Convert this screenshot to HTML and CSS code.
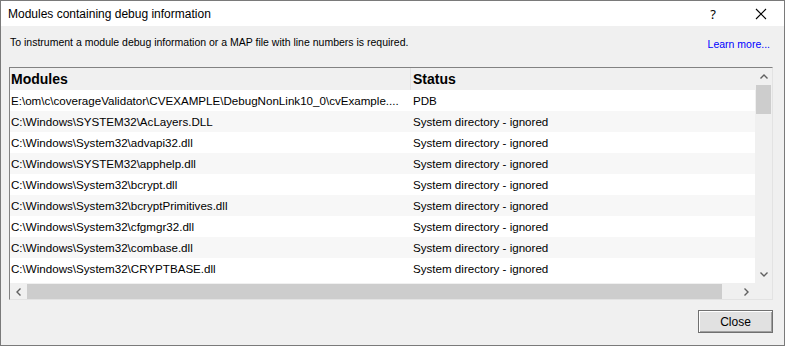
FILE: index.html
```html
<!DOCTYPE html>
<html>
<head>
    <title>Modules containing debug information</title>
    <link rel="stylesheet" href="styles.css">
</head>
<body>
    <div class="window">
        <div class="titlebar">
            <span class="title">Modules containing debug information</span>
            <span class="title-btn help">?</span>
            <span class="title-btn close">
                <svg width="12" height="12" viewBox="0 0 12 12"><path d="M1 1 L11 11 M11 1 L1 11" stroke="#000" stroke-width="1.1" fill="none"/></svg>
            </span>
        </div>

        <div class="content">
            <div class="intro">
                <span>To instrument a module debug information or a MAP file with line numbers is required.</span>
                <a href="#" class="learn">Learn more...</a>
            </div>

            <!-- Module list -->
            <div class="listbox">
                <div class="list-main">
                    <div class="list-area">
                        <div class="row head">
                            <div class="col-mod">Modules</div>
                            <div class="col-status">Status</div>
                        </div>
                        <div class="row"><div class="col-mod">E:\om\c\coverageValidator\CVEXAMPLE\DebugNonLink10_0\cvExample....</div><div class="col-status">PDB</div></div>
                        <div class="row alt"><div class="col-mod">C:\Windows\SYSTEM32\AcLayers.DLL</div><div class="col-status">System directory - ignored</div></div>
                        <div class="row"><div class="col-mod">C:\Windows\System32\advapi32.dll</div><div class="col-status">System directory - ignored</div></div>
                        <div class="row alt"><div class="col-mod">C:\Windows\SYSTEM32\apphelp.dll</div><div class="col-status">System directory - ignored</div></div>
                        <div class="row"><div class="col-mod">C:\Windows\System32\bcrypt.dll</div><div class="col-status">System directory - ignored</div></div>
                        <div class="row alt"><div class="col-mod">C:\Windows\System32\bcryptPrimitives.dll</div><div class="col-status">System directory - ignored</div></div>
                        <div class="row"><div class="col-mod">C:\Windows\System32\cfgmgr32.dll</div><div class="col-status">System directory - ignored</div></div>
                        <div class="row alt"><div class="col-mod">C:\Windows\System32\combase.dll</div><div class="col-status">System directory - ignored</div></div>
                        <div class="row"><div class="col-mod">C:\Windows\System32\CRYPTBASE.dll</div><div class="col-status">System directory - ignored</div></div>
                    </div>
                    <div class="vscroll">
                        <div class="arrow">
                            <svg width="8" height="5" viewBox="0 0 8 5"><path d="M0.5 4.5 L4 1 L7.5 4.5" stroke="#606060" stroke-width="1.4" fill="none"/></svg>
                        </div>
                        <div class="vtrack"><div class="vthumb"></div></div>
                        <div class="arrow">
                            <svg width="8" height="5" viewBox="0 0 8 5"><path d="M0.5 0.5 L4 4 L7.5 0.5" stroke="#606060" stroke-width="1.4" fill="none"/></svg>
                        </div>
                    </div>
                </div>
                <div class="hscroll">
                    <div class="arrow">
                        <svg width="5" height="8" viewBox="0 0 5 8"><path d="M4.5 0.5 L1 4 L4.5 7.5" stroke="#606060" stroke-width="1.4" fill="none"/></svg>
                    </div>
                    <div class="htrack"><div class="hthumb"></div></div>
                    <div class="arrow">
                        <svg width="5" height="8" viewBox="0 0 5 8"><path d="M0.5 0.5 L4 4 L0.5 7.5" stroke="#606060" stroke-width="1.4" fill="none"/></svg>
                    </div>
                    <div class="corner"></div>
                </div>
            </div>

            <div class="footer">
                <button class="btn">Close</button>
            </div>
        </div>
    </div>
</body>
</html>
```

FILE: styles.css
```css
html, body {
    margin: 0;
    padding: 0;
}
body {
    width: 785px;
    height: 346px;
    overflow: hidden;
    font-family: "Liberation Sans", Arial, sans-serif;
}
.window {
    box-sizing: border-box;
    width: 785px;
    height: 346px;
    border: 1px solid #7a7a7a;
    background: #f0f0f0;
    display: flex;
    flex-direction: column;
}
.titlebar {
    height: 25px;
    flex-shrink: 0;
    background: white;
    display: flex;
    align-items: center;
    padding-left: 7px;
}
.title {
    flex: 1;
    font-size: 12px;
    color: #000;
}
.title-btn {
    width: 46px;
    display: flex;
    justify-content: center;
    align-items: center;
    font-family: "Noto Sans", sans-serif;
    font-size: 13px;
}
.help {
    margin-right: 2px;
}
.content {
    flex: 1;
    display: flex;
    flex-direction: column;
    padding: 0 11px 0 8px;
}
.intro {
    display: flex;
    justify-content: space-between;
    align-items: flex-start;
    height: 41px;
    box-sizing: border-box;
    padding: 10px 0 0 1px;
    font-size: 10.5px;
    line-height: 13px;
    color: #000;
    flex-shrink: 0;
}
.learn {
    color: #0000ff;
    text-decoration: none;
    margin-right: 3px;
    margin-top: 2px;
}
.listbox {
    height: 233px;
    flex-shrink: 0;
    box-sizing: border-box;
    border-top: 1px solid #828282;
    border-left: 1px solid #828282;
    border-right: 1px solid #e3e3e3;
    border-bottom: 1px solid #e3e3e3;
    display: flex;
    flex-direction: column;
}
.list-main {
    flex: 1;
    display: flex;
    overflow: hidden;
}
.list-area {
    flex: 1;
    background: white;
    overflow: hidden;
}
.row {
    display: flex;
    height: 21px;
    align-items: center;
    font-size: 11.6px;
    color: #000;
    white-space: nowrap;
}
.row.alt {
    background: #f7f7f7;
}
.row.head {
    background: #f0f0f0;
    font-weight: bold;
    font-size: 14px;
    height: 22px;
}
.col-mod {
    width: 399px;
    padding-left: 1px;
    overflow: hidden;
    text-overflow: clip;
}
.col-status {
    padding-left: 3px;
}
.head .col-mod {
    border-right: 1px solid #e2e2e2;
    height: 22px;
    line-height: 22px;
}
.head .col-status {
    padding-left: 2px;
}
.vscroll {
    width: 17px;
    background: #f0f0f0;
    display: flex;
    flex-direction: column;
}
.arrow {
    height: 17px;
    width: 17px;
    display: flex;
    align-items: center;
    justify-content: center;
    flex-shrink: 0;
}
.vtrack {
    flex: 1;
    padding: 0 1px;
}
.vthumb {
    height: 29px;
    background: #cdcdcd;
}
.hscroll {
    height: 16px;
    flex-shrink: 0;
    display: flex;
    background: #f0f0f0;
}
.htrack {
    flex: 1;
    display: flex;
    align-items: center;
}
.hthumb {
    width: 695px;
    height: 15px;
    background: #cdcdcd;
}
.corner {
    width: 17px;
    background: #f0f0f0;
}
.footer {
    display: flex;
    justify-content: flex-end;
    padding-top: 10px;
}
.btn {
    width: 75px;
    height: 23px;
    background: #e1e1e1;
    border: 1px solid #707070;
    box-shadow: inset 1px 1px 0 #fff, inset -1px -1px 0 #a0a0a0;
    font-family: "Liberation Sans", Arial, sans-serif;
    font-size: 12px;
    color: #000;
    padding: 0;
}
```
